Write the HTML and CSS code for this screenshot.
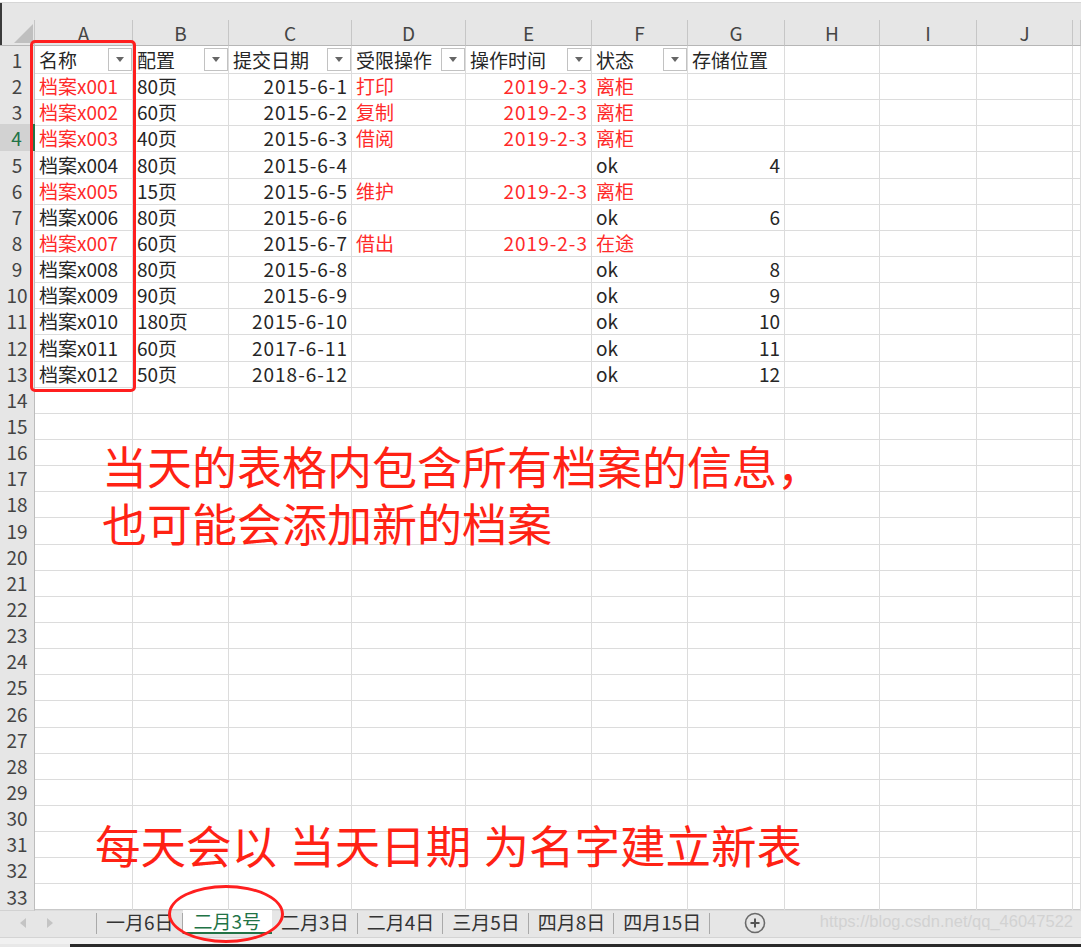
FILE: index.html
```html
<!DOCTYPE html>
<html lang="zh">
<head>
<meta charset="utf-8">
<title>档案表</title>
<link rel="stylesheet" href="styles.css">
</head>
<body>
<div class="formula"></div>
<div class="sheet">
  <div class="row head"><span class="corner"><i class="tri"></i></span><span>A</span><span>B</span><span>C</span><span>D</span><span>E</span><span>F</span><span>G</span><span>H</span><span>I</span><span>J</span><span></span></div>
  <div class="row"><span class="rh">1</span><span class="f">名称<b class="fb"><i></i></b></span><span class="f">配置<b class="fb"><i></i></b></span><span class="f">提交日期<b class="fb"><i></i></b></span><span class="f">受限操作<b class="fb"><i></i></b></span><span class="f">操作时间<b class="fb"><i></i></b></span><span class="f">状态<b class="fb"><i></i></b></span><span>存储位置</span><span></span><span></span><span></span><span></span></div>
  <div class="row"><span class="rh">2</span><span class="red">档案x001</span><span>80页</span><span class="r">2015-6-1</span><span class="red">打印</span><span class="r red">2019-2-3</span><span class="red">离柜</span><span></span><span></span><span></span><span></span><span></span></div>
  <div class="row"><span class="rh">3</span><span class="red">档案x002</span><span>60页</span><span class="r">2015-6-2</span><span class="red">复制</span><span class="r red">2019-2-3</span><span class="red">离柜</span><span></span><span></span><span></span><span></span><span></span></div>
  <div class="row"><span class="rh sel">4</span><span class="red">档案x003</span><span>40页</span><span class="r">2015-6-3</span><span class="red">借阅</span><span class="r red">2019-2-3</span><span class="red">离柜</span><span></span><span></span><span></span><span></span><span></span></div>
  <div class="row"><span class="rh">5</span><span>档案x004</span><span>80页</span><span class="r">2015-6-4</span><span></span><span></span><span>ok</span><span class="n">4</span><span></span><span></span><span></span><span></span></div>
  <div class="row"><span class="rh">6</span><span class="red">档案x005</span><span>15页</span><span class="r">2015-6-5</span><span class="red">维护</span><span class="r red">2019-2-3</span><span class="red">离柜</span><span></span><span></span><span></span><span></span><span></span></div>
  <div class="row"><span class="rh">7</span><span>档案x006</span><span>80页</span><span class="r">2015-6-6</span><span></span><span></span><span>ok</span><span class="n">6</span><span></span><span></span><span></span><span></span></div>
  <div class="row"><span class="rh">8</span><span class="red">档案x007</span><span>60页</span><span class="r">2015-6-7</span><span class="red">借出</span><span class="r red">2019-2-3</span><span class="red">在途</span><span></span><span></span><span></span><span></span><span></span></div>
  <div class="row"><span class="rh">9</span><span>档案x008</span><span>80页</span><span class="r">2015-6-8</span><span></span><span></span><span>ok</span><span class="n">8</span><span></span><span></span><span></span><span></span></div>
  <div class="row"><span class="rh">10</span><span>档案x009</span><span>90页</span><span class="r">2015-6-9</span><span></span><span></span><span>ok</span><span class="n">9</span><span></span><span></span><span></span><span></span></div>
  <div class="row"><span class="rh">11</span><span>档案x010</span><span>180页</span><span class="r">2015-6-10</span><span></span><span></span><span>ok</span><span class="n">10</span><span></span><span></span><span></span><span></span></div>
  <div class="row"><span class="rh">12</span><span>档案x011</span><span>60页</span><span class="r">2017-6-11</span><span></span><span></span><span>ok</span><span class="n">11</span><span></span><span></span><span></span><span></span></div>
  <div class="row"><span class="rh">13</span><span>档案x012</span><span>50页</span><span class="r">2018-6-12</span><span></span><span></span><span>ok</span><span class="n">12</span><span></span><span></span><span></span><span></span></div>
  <div class="row"><span class="rh">14</span><span></span><span></span><span></span><span></span><span></span><span></span><span></span><span></span><span></span><span></span><span></span></div>
  <div class="row"><span class="rh">15</span><span></span><span></span><span></span><span></span><span></span><span></span><span></span><span></span><span></span><span></span><span></span></div>
  <div class="row"><span class="rh">16</span><span></span><span></span><span></span><span></span><span></span><span></span><span></span><span></span><span></span><span></span><span></span></div>
  <div class="row"><span class="rh">17</span><span></span><span></span><span></span><span></span><span></span><span></span><span></span><span></span><span></span><span></span><span></span></div>
  <div class="row"><span class="rh">18</span><span></span><span></span><span></span><span></span><span></span><span></span><span></span><span></span><span></span><span></span><span></span></div>
  <div class="row"><span class="rh">19</span><span></span><span></span><span></span><span></span><span></span><span></span><span></span><span></span><span></span><span></span><span></span></div>
  <div class="row"><span class="rh">20</span><span></span><span></span><span></span><span></span><span></span><span></span><span></span><span></span><span></span><span></span><span></span></div>
  <div class="row"><span class="rh">21</span><span></span><span></span><span></span><span></span><span></span><span></span><span></span><span></span><span></span><span></span><span></span></div>
  <div class="row"><span class="rh">22</span><span></span><span></span><span></span><span></span><span></span><span></span><span></span><span></span><span></span><span></span><span></span></div>
  <div class="row"><span class="rh">23</span><span></span><span></span><span></span><span></span><span></span><span></span><span></span><span></span><span></span><span></span><span></span></div>
  <div class="row"><span class="rh">24</span><span></span><span></span><span></span><span></span><span></span><span></span><span></span><span></span><span></span><span></span><span></span></div>
  <div class="row"><span class="rh">25</span><span></span><span></span><span></span><span></span><span></span><span></span><span></span><span></span><span></span><span></span><span></span></div>
  <div class="row"><span class="rh">26</span><span></span><span></span><span></span><span></span><span></span><span></span><span></span><span></span><span></span><span></span><span></span></div>
  <div class="row"><span class="rh">27</span><span></span><span></span><span></span><span></span><span></span><span></span><span></span><span></span><span></span><span></span><span></span></div>
  <div class="row"><span class="rh">28</span><span></span><span></span><span></span><span></span><span></span><span></span><span></span><span></span><span></span><span></span><span></span></div>
  <div class="row"><span class="rh">29</span><span></span><span></span><span></span><span></span><span></span><span></span><span></span><span></span><span></span><span></span><span></span></div>
  <div class="row"><span class="rh">30</span><span></span><span></span><span></span><span></span><span></span><span></span><span></span><span></span><span></span><span></span><span></span></div>
  <div class="row"><span class="rh">31</span><span></span><span></span><span></span><span></span><span></span><span></span><span></span><span></span><span></span><span></span><span></span></div>
  <div class="row"><span class="rh">32</span><span></span><span></span><span></span><span></span><span></span><span></span><span></span><span></span><span></span><span></span><span></span></div>
  <div class="row"><span class="rh">33</span><span></span><span></span><span></span><span></span><span></span><span></span><span></span><span></span><span></span><span></span><span></span></div>
</div>
<div class="tabbar">
  <div class="nav"><i class="arr left"></i><i class="arr right"></i></div>
  <div class="tab">一月6日</div>
  <div class="tab active">二月3号</div>
  <div class="tab">二月3日</div>
  <div class="tab">二月4日</div>
  <div class="tab">三月5日</div>
  <div class="tab">四月8日</div>
  <div class="tab">四月15日</div>
  <div class="add"><svg width="22" height="22" viewBox="0 0 22 22"><circle cx="11" cy="11" r="9.5" fill="none" stroke="#6a6a6a" stroke-width="1.6"/><path d="M11 6.5v9M6.5 11h9" stroke="#555" stroke-width="2"/></svg></div>
  <div class="wm">https://blog.csdn.net/qq_46047522</div>
</div>
<div class="strip"></div>
<div class="dark"><span class="lite"></span></div>

<div class="box"></div>
<div class="note1">当天的表格内包含所有档案的信息，</div>
<div class="note1b">也可能会添加新的档案</div>
<div class="note2">每天会以 当天日期 为名字建立新表</div>
<div class="oval"></div>
</body>
</html>
```
FILE: styles.css
```css
*{box-sizing:border-box;margin:0;padding:0}
body{width:1081px;height:947px;overflow:hidden;background:#fff;position:relative;font-family:"Noto Sans CJK SC","Noto Sans",sans-serif;color:#262626}
.formula{height:3px;background:#fff;border-bottom:1px solid #d6d6d6}
.sheet{display:flex;flex-direction:column}
.row{display:grid;grid-template-columns:35px 98px 96px 123px 114px 126px 96px 97px 95px 97px 96px 8px;height:26.15px}
.row>span{border-right:1px solid #dcdcdc;border-bottom:1px solid #dcdcdc;font-size:19px;padding:0 3px 0 4px;white-space:nowrap;display:flex;align-items:center}
.row>.rh{background:#e6e6e6;border-right-color:#bdbdbd;border-bottom-color:#d2d2d2;justify-content:center;font-size:19px;color:#444;padding:0}
.row>.rh.sel{background:#d2d2d2;color:#217346;border-right:2px solid #217346}
.head{height:43px;background:#e6e6e6;align-items:end;box-shadow:inset 2px 0 0 #3a3a3a}
.head>span{height:26px;border-right-color:#c6c6c6;border-bottom-color:#b6b6b6;justify-content:center;font-size:19px;color:#444;padding:0 0 1px}
.head>.corner{justify-content:flex-end;align-items:flex-end;padding:0 1px 2px 0}
.tri{display:block;width:0;height:0;border-left:19px solid transparent;border-bottom:19px solid #bfbfbf}
.row>.r{justify-content:flex-end;padding:0 3px 0 2px;letter-spacing:1px}
.row>.n{justify-content:flex-end;padding:0 4px 0 2px}
.row>.red{color:#ff2a2a}
.row>.f{justify-content:space-between;padding-right:0}
.fb{width:24px;height:23px;border:1px solid #c2c2c2;background:#fff;display:flex;align-items:center;justify-content:center}
.fb i{width:0;height:0;border-left:4.5px solid transparent;border-right:4.5px solid transparent;border-top:5px solid #666}
.tabbar{height:28px;background:#e6e6e6;border-top:1px solid #c9c9c9;display:flex;align-items:flex-start;font-size:19px;color:#333}
.nav{width:97px;border-right:1px solid #a9a9a9;display:flex;align-items:center;gap:17px;padding-left:20px;margin-top:3px;height:21px}
.arr{width:0;height:0;border-top:5px solid transparent;border-bottom:5px solid transparent}
.arr.left{border-right:6px solid #c4c4c4}
.arr.right{border-left:6px solid #c4c4c4;margin-left:4px}
.tab{height:24px;line-height:23px;padding:0 9px;position:relative}
.tab::after{content:"";position:absolute;right:0;top:3px;height:21px;border-right:1px solid #a9a9a9}
.tab.active{background:#fff;color:#217346;border-bottom:2px solid #217346;line-height:22px;padding:0 11px}
.tab.active::after{display:none}
.add{margin:2px 0 0 34px;height:22px}
.add svg{display:block}
.wm{margin-left:auto;margin-top:2px;padding-right:8px;font-family:"Liberation Sans",Arial,sans-serif;font-size:16.5px;color:#d2d2d2}
.strip{height:7px;background:#f1f1f1;border-top:1px solid #d4d4d4}
.dark{height:3px;background:#2a2a2a;display:flex}
.lite{width:70px;background:#e8e8e8}
.box{position:absolute;left:30px;top:40px;width:106px;height:352px;border:3px solid #ff1f1f;border-radius:5px}
.note1,.note1b{position:absolute;left:102px;font-size:45px;line-height:52px;color:#ff2214;white-space:nowrap}
.note1{top:440px}
.note1b{top:497px}
.note2{position:absolute;left:95px;top:816px;font-size:45.5px;line-height:57px;color:#ff2214;white-space:nowrap;word-spacing:2px}
.oval{position:absolute;left:168px;top:885px;width:116px;height:58px;border:3.5px solid #ff1f1f;border-radius:50%}
```
